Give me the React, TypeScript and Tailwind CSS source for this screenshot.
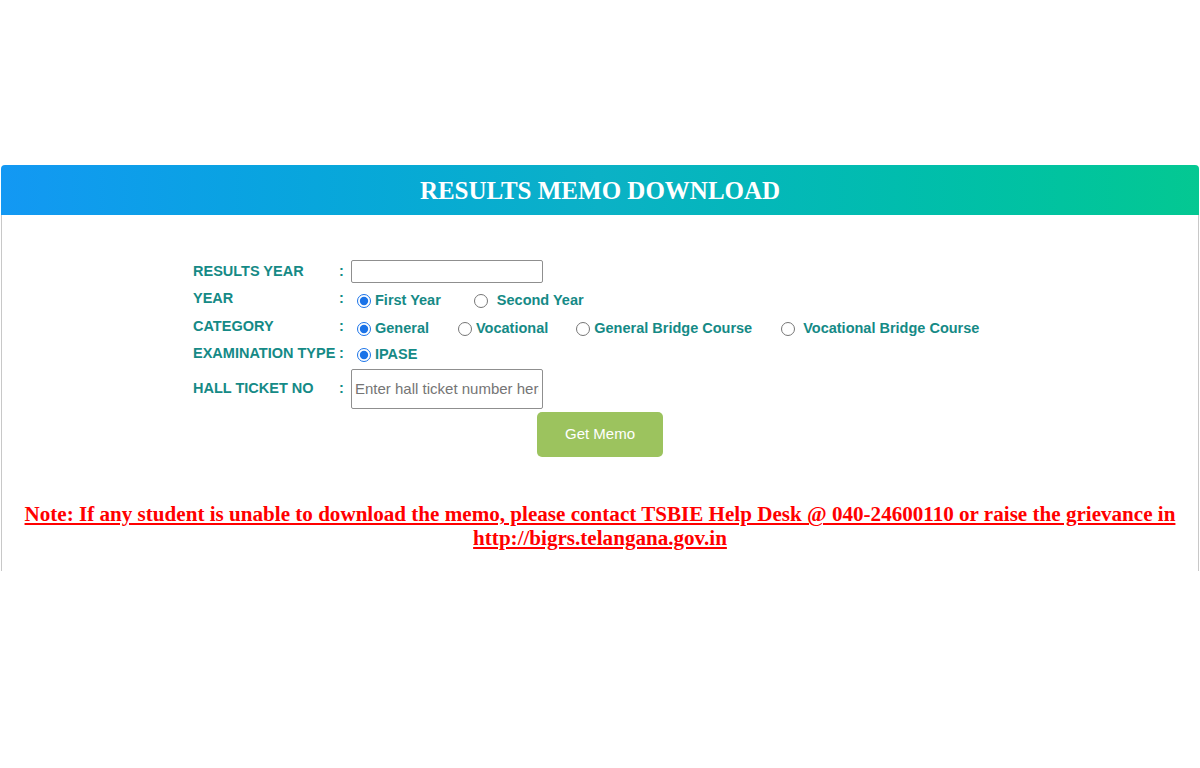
import { useState } from 'react'

const labelCls = "w-[146px] shrink-0 text-[14.5px] font-bold text-[#158a86]"
const colonCls = "w-[12px] shrink-0 text-[14.5px] font-bold text-[#158a86]"
const optCls = "text-[14.5px] font-bold text-[#158a86]"
const radioCls = "w-[14px] h-[14px] m-0 shrink-0 accent-[#1a73e8]"

export default function App() {
  const [year, setYear] = useState('first')
  const [category, setCategory] = useState('general')
  const [resultsYear, setResultsYear] = useState('')
  const [hallTicket, setHallTicket] = useState('')

  return (
    <div className="min-h-[768px] bg-white pt-[165px] font-['Liberation_Sans',Arial,sans-serif]">
      <div className="mx-[1px]">
        {/* header */}
        <div className="h-[50px] rounded-t-[4px] bg-gradient-to-r from-[#1398f3] via-[#0bb1c6] to-[#04c892] flex items-center justify-center">
          <h1 className="text-white font-bold text-[25px] leading-none font-['Liberation_Serif','Times_New_Roman',serif] pt-[1px]">
            RESULTS MEMO DOWNLOAD
          </h1>
        </div>

        {/* body */}
        <div className="border-l border-r border-[#c8c8c8] pt-[44px] pb-[21px]">
          <div className="pl-[191px]">
            <div className="flex items-center h-[25px]">
              <div className={labelCls}>RESULTS YEAR</div>
              <div className={colonCls}>:</div>
              <input
                type="text"
                value={resultsYear}
                onChange={(e) => setResultsYear(e.target.value)}
                className="w-[192px] h-[23px] border border-[#8f8f8f] rounded-[2px] px-[3px] text-[14px] outline-none"
              />
            </div>

            <div className="flex items-center h-[29px]">
              <div className={labelCls}>YEAR</div>
              <div className={colonCls}>:</div>
              <div className="flex items-center mt-[4px] pl-[6px]">
                <input type="radio" name="year" checked={year === 'first'} onChange={() => setYear('first')} className={radioCls} />
                <span className={`${optCls} ml-[4px]`}>First Year</span>
                <input type="radio" name="year" checked={year === 'second'} onChange={() => setYear('second')} className={`${radioCls} ml-[33px]`} />
                <span className={`${optCls} ml-[9px]`}>Second Year</span>
              </div>
            </div>

            <div className="flex items-center h-[27px]">
              <div className={labelCls}>CATEGORY</div>
              <div className={colonCls}>:</div>
              <div className="flex items-center mt-[4px] pl-[6px]">
                <input type="radio" name="cat" checked={category === 'general'} onChange={() => setCategory('general')} className={radioCls} />
                <span className={`${optCls} ml-[4px]`}>General</span>
                <input type="radio" name="cat" checked={category === 'vocational'} onChange={() => setCategory('vocational')} className={`${radioCls} ml-[29px]`} />
                <span className={`${optCls} ml-[4px]`}>Vocational</span>
                <input type="radio" name="cat" checked={category === 'gbc'} onChange={() => setCategory('gbc')} className={`${radioCls} ml-[28px]`} />
                <span className={`${optCls} ml-[4px]`}>General Bridge Course</span>
                <input type="radio" name="cat" checked={category === 'vbc'} onChange={() => setCategory('vbc')} className={`${radioCls} ml-[29px]`} />
                <span className={`${optCls} ml-[8px]`}>Vocational Bridge Course</span>
              </div>
            </div>

            <div className="flex items-center h-[27px]">
              <div className={labelCls}>EXAMINATION TYPE</div>
              <div className={colonCls}>:</div>
              <div className="flex items-center mt-[3px] pl-[6px]">
                <input type="radio" name="exam" defaultChecked className={radioCls} />
                <span className={`${optCls} ml-[4px]`}>IPASE</span>
              </div>
            </div>

            <div className="flex items-center h-[43px]">
              <div className={labelCls}>HALL TICKET NO</div>
              <div className={colonCls}>:</div>
              <input
                type="text"
                value={hallTicket}
                onChange={(e) => setHallTicket(e.target.value)}
                placeholder="Enter hall ticket number here"
                className="w-[192px] h-[40px] border border-[#8f8f8f] rounded-[2px] px-[3px] text-[15px] text-black placeholder-[#757575] outline-none"
              />
            </div>
          </div>

          <div className="flex justify-center mt-[2px]">
            <button className="w-[126px] h-[45px] rounded-[5px] bg-[#9cc35e] text-white text-[15px]">
              Get Memo
            </button>
          </div>

          <p className="mt-[45px] text-center text-[#ff0000] font-bold underline text-[21.1px] leading-[24px] font-['Liberation_Serif','Times_New_Roman',serif]">
            Note: If any student is unable to download the memo, please contact TSBIE Help Desk @ 040-24600110 or raise the grievance in
            <br />
            http://bigrs.telangana.gov.in
          </p>
        </div>
      </div>
    </div>
  )
}
